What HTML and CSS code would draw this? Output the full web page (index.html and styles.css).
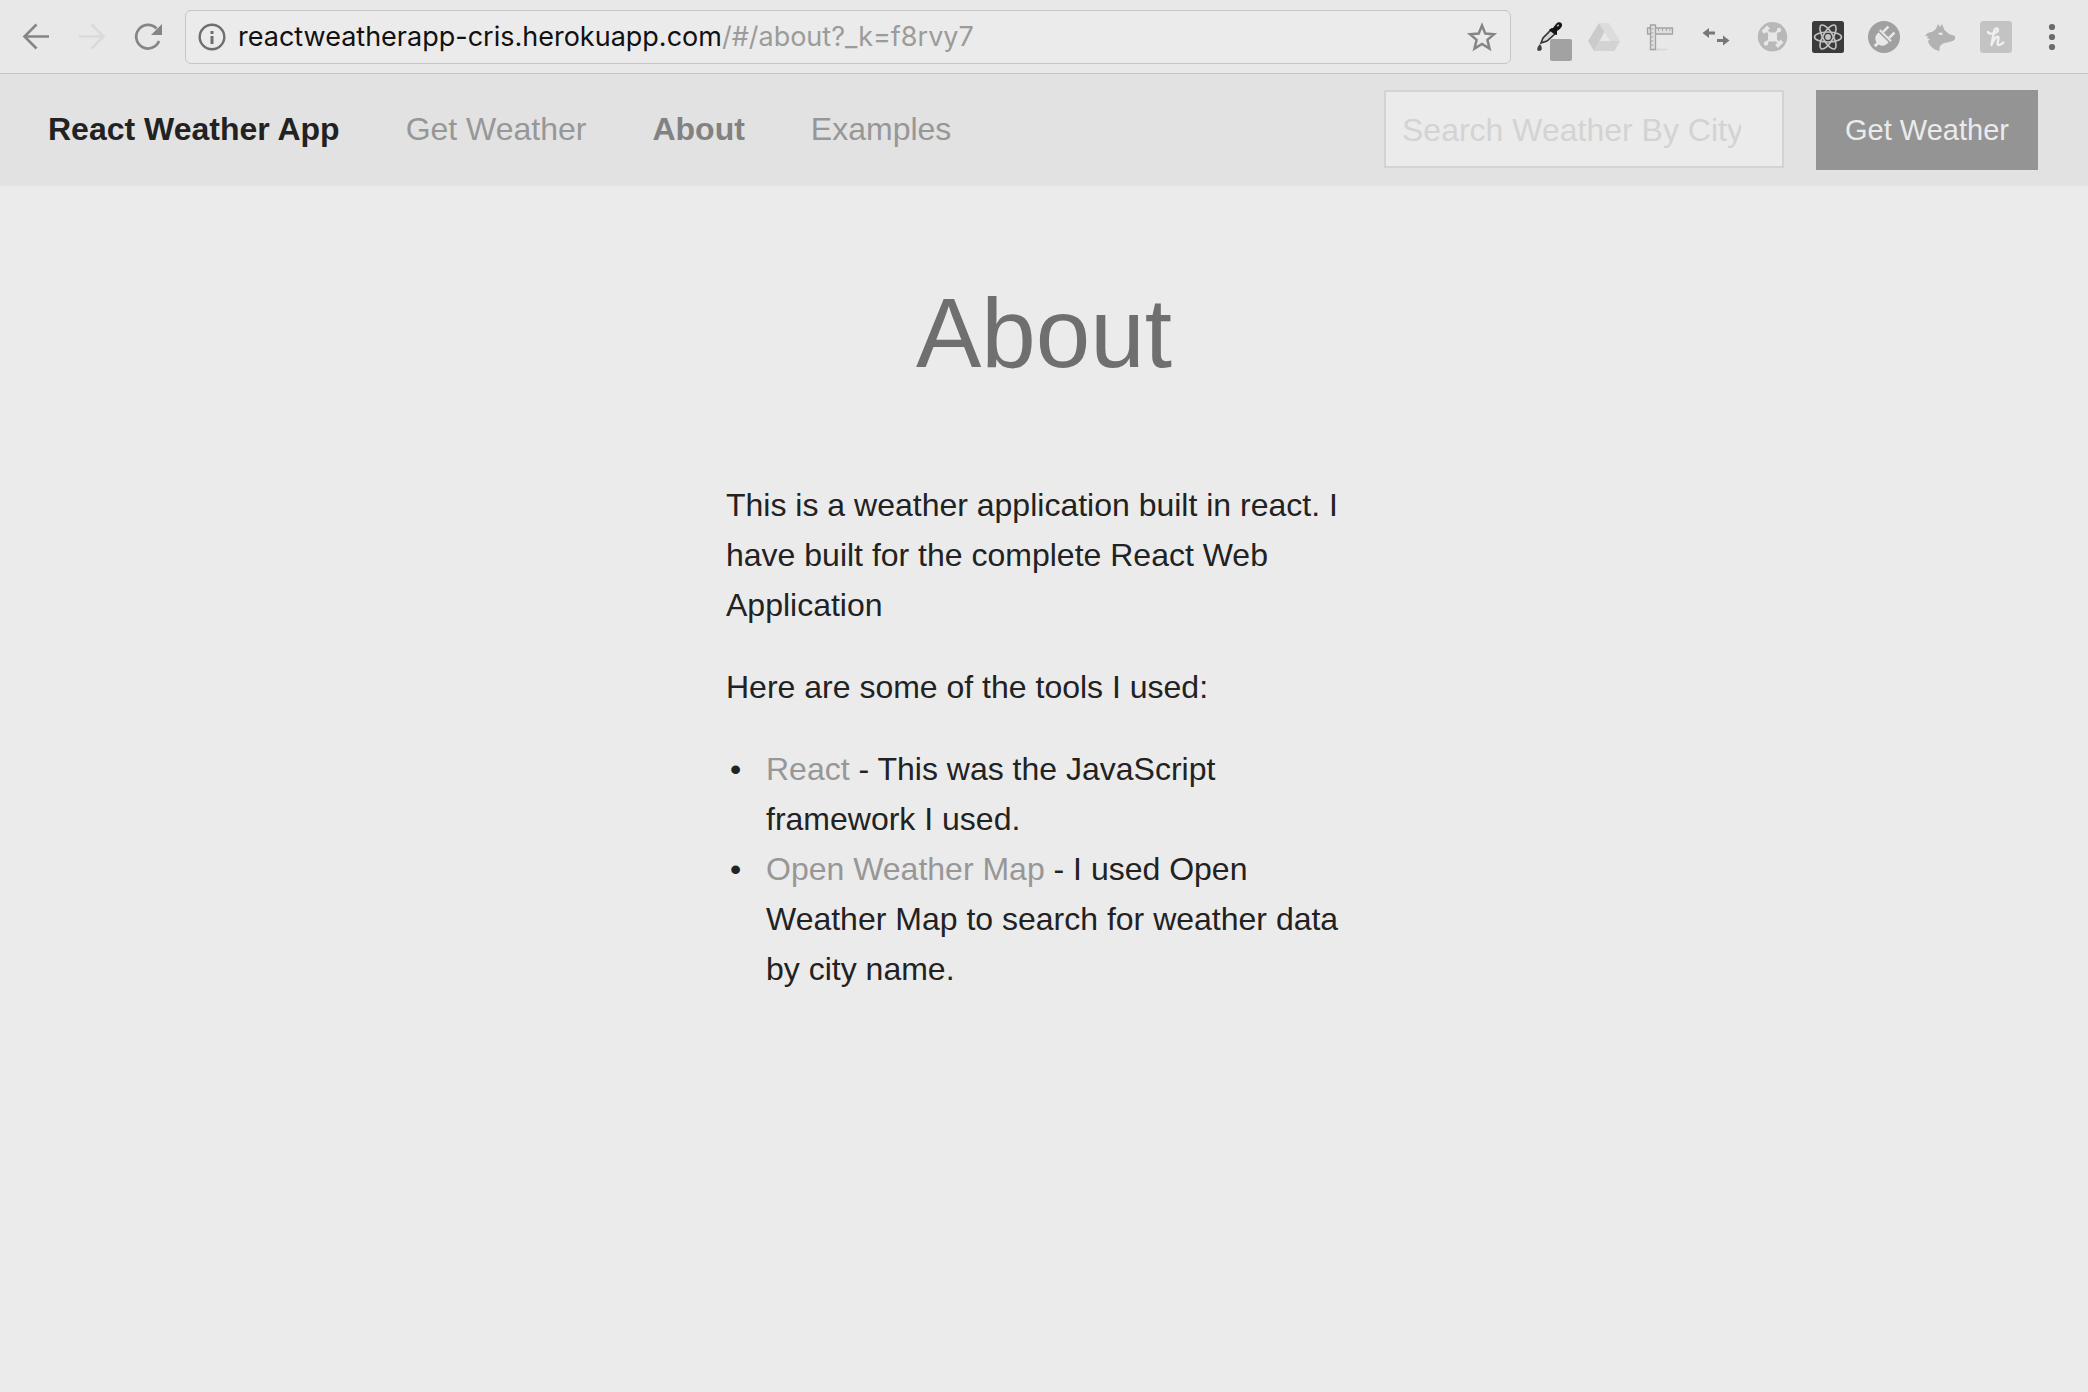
FILE: index.html
```html
<!DOCTYPE html>
<html lang="en">
<head>
<meta charset="utf-8">
<title>React Weather App</title>
<link rel="stylesheet" href="styles.css">
</head>
<body>
<header class="toolbar">
  <div class="tools">
    <button class="tool" type="button" aria-label="Back"><svg viewBox="0 0 32 32" fill="none" stroke="#858585" stroke-width="2.6"><path d="M29 15.5H4.5M16.500 3.500L4.500 15.500L16.500 27.500"/></svg></button>
    <button class="tool" type="button" aria-label="Forward"><svg viewBox="0 0 32 32" fill="none" stroke="#dadada" stroke-width="2.6"><path d="M3 15.500H27.500M15.500 3.500L27.500 15.500L15.500 27.500"/></svg></button>
    <button class="tool" type="button" aria-label="Reload"><svg viewBox="0 0 32 32"><path d="M24.500 7.500A11.800 11.800 0 1 0 27 20" fill="none" stroke="#858585" stroke-width="2.7"/><path d="M30 3V14H19z" fill="#858585"/></svg></button>
  </div>
  <div class="omnibox">
    <svg class="info" viewBox="0 0 28 28"><circle cx="14" cy="14" r="12.300" fill="none" stroke="#6e6e6e" stroke-width="2.400"/><path d="M12.500 8h3v3h-3zM12.500 13h3v8h-3z" fill="#6e6e6e"/></svg>
    <div class="url"><span class="host">reactweatherapp-cris.herokuapp.com</span>/#/about?_k=f8rvy7</div>
    <button class="tool" type="button" aria-label="Bookmark"><svg viewBox="0 0 32 32"><path d="M16 4.500L19.300 12.500L28 13.200L21.400 18.900L23.500 27.500L16 22.900L8.500 27.500L10.600 18.900L4 13.200L12.700 12.500Z" fill="none" stroke="#858585" stroke-width="2.500"/></svg></button>
  </div>
  <div class="tools">
    <button class="tool" type="button" aria-label="Color picker"><svg viewBox="0 0 32 32"><path d="M9 22L11 17L20 8L24 12L15 20Z" fill="#d5d5d5" stroke="#333" stroke-width="1.600"/><path d="M18 8l3-1 3-4c2-3 7-2 6 2-1 2-3 4-5 5l0 4-3-1-5-4z" fill="#151515"/><path d="M25 5l2-1" stroke="#aaa" stroke-width="1.500"/><path d="M8 23c3 4 2 7-1 7s-2-4 1-7z" fill="#444"/><rect x="18" y="18" width="22" height="22" rx="2" fill="#a2a2a2"/></svg></button>
    <button class="tool" type="button" aria-label="Drive"><svg viewBox="0 0 32 32"><path d="M11 2L16.500 11L6 30L0 20Z" fill="#cbcbcb"/><path d="M11 2H21L32 20H22Z" fill="#dcdcdc"/><path d="M11.500 20H32L26.500 30H6Z" fill="#d3d3d3"/></svg></button>
    <button class="tool" type="button" aria-label="Ruler"><svg viewBox="0 0 32 32"><ellipse cx="14" cy="28.500" rx="10" ry="1" fill="#d8d8d8"/><g fill="#dedede" stroke="#a3a3a3" stroke-width="1.300"><path d="M3.500 7h25v6h-25z"/><path d="M6.500 4h5v24.500h-5z"/></g><path d="M14.500 7v3M18.500 7v3M22.500 7v3M26 7v3M7 8h2.500M7 12h2.500M7 16h2.500M7 20h2.500M7 24h2.500" stroke="#a8a8a8"/></svg></button>
    <button class="tool" type="button" aria-label="Redirect"><svg viewBox="0 0 32 32" fill="#777"><path d="M2.500 12L9 7v3.500h6v3H9V17zM29.500 19.500L23 14.500V18h-6v3h6v3.500z"/></svg></button>
    <button class="tool" type="button" aria-label="Network"><svg viewBox="0 0 32 32"><circle cx="16.500" cy="15.800" r="14.700" fill="#b8b8b8"/><g stroke="#e7e7e7" stroke-width="2"><path d="M9 8L24 23M24 8L9 23"/><path d="M7 11.500l5.500-5.500M20.500 25.500l5.500-5.500" stroke-width="4"/></g><g fill="#e7e7e7"><rect x="12" y="11.500" width="9" height="9" rx="2.500"/><circle cx="23" cy="9" r="2.200"/><circle cx="10" cy="22.500" r="2.200"/></g></svg></button>
    <button class="tool" type="button" aria-label="React tools"><svg viewBox="0 0 32 32"><rect width="32" height="32" rx="2.500" fill="#3b3b3b"/><g fill="none" stroke="#c3c3c3" stroke-width="1.600"><ellipse cx="16" cy="16" rx="13.500" ry="5"/><ellipse cx="16" cy="16" rx="13.500" ry="5" transform="rotate(60 16 16)"/><ellipse cx="16" cy="16" rx="13.500" ry="5" transform="rotate(120 16 16)"/></g><circle cx="16" cy="16" r="2.900" fill="#c3c3c3"/></svg></button>
    <button class="tool" type="button" aria-label="Plug"><svg viewBox="0 0 32 32"><circle cx="16" cy="16" r="16" fill="#a0a0a0"/><g transform="rotate(45 16 16)" fill="#e8e8e8"><path d="M8 13h16v2H8zM9 16.500h14v2c0 3.500-2.500 6-5.500 6.500v4h-3v-4C11.500 24.500 9 22 9 18.500z"/><path d="M10.500 5.500h2.600V13h-2.600zM19 5.500h2.600V13H19z"/></g></svg></button>
    <button class="tool" type="button" aria-label="Fox"><svg viewBox="0 0 32 32"><path d="M1 15C3 12 5 11 8 11L12 8L14 3L16 6L18 3L20.500 9L25 13L31 15V18C29 21 24 21 20.500 22C17 23 15 25 15.500 30C10 29 5 25 4 20L6 18L3 17L4 15Z" fill="#b2b2b2"/><path d="M14 12.500c2-1.500 4-1.500 5 1-2 1-4 .5-5-1z" fill="#e5e5e5"/></svg></button>
    <button class="tool" type="button" aria-label="Coupons"><svg viewBox="0 0 32 32"><rect width="32" height="32" rx="3.500" fill="#c3c3c3"/><path d="M8 11C9 14 18 12.500 18 8.800C18 6.800 14.800 6.800 14 10.500L11.500 24C13 19 18 13 18.500 17C18.500 20 16 24 19 24C21 24 22 23 23.300 21.500" fill="none" stroke="#efefef" stroke-width="2.400" stroke-linecap="round" stroke-linejoin="round"/></svg></button>
    <button class="tool" type="button" aria-label="Menu"><svg viewBox="0 0 32 32" fill="#6b6b6b"><circle cx="16" cy="6" r="3.100"/><circle cx="16" cy="16" r="3.100"/><circle cx="16" cy="26" r="3.100"/></svg></button>
  </div>
</header>
<nav class="nav">
  <ul class="menu">
    <li class="brand">React Weather App</li>
    <li><a href="#/">Get Weather</a></li>
    <li><a class="active" href="#/about">About</a></li>
    <li><a href="#/examples">Examples</a></li>
  </ul>
  <form class="search">
    <input type="search" aria-label="Search weather by city" placeholder="Search Weather By City">
    <button class="submit" type="button">Get Weather</button>
  </form>
</nav>
<main class="page">
  <h1>About</h1>
  <p>This is a weather application built in react. I have built for the complete React Web Application</p>
  <p>Here are some of the tools I used:</p>
  <ul class="list">
    <li><a href="#react">React</a> - This was the JavaScript framework I used.</li>
    <li><a href="#map">Open Weather Map</a> - I used Open Weather Map to search for weather data by city name.</li>
  </ul>
</main>
</body>
</html>
```
FILE: styles.css
```css
* { box-sizing: border-box; }
body {
  margin: 0;
  background: #ebebeb;
  color: #222;
  font: 32px/50px "Liberation Sans", Arial, sans-serif;
}
button { border: 0; padding: 0; background: none; font: inherit; }
a { color: #979797; text-decoration: none; }

.toolbar {
  display: flex;
  align-items: center;
  gap: 21px;
  height: 74px;
  padding: 0 20px;
  background: #e8e8e8;
  border-bottom: 1px solid #c6c6c6;
}
.tools { display: flex; gap: 24px; }
.tool { flex: none; width: 32px; height: 32px; }
svg { display: block; width: 100%; height: 100%; overflow: visible; }
.omnibox {
  flex: 1;
  display: flex;
  align-items: center;
  gap: 12px;
  height: 54px;
  padding: 0 12px;
  border: 1px solid #c6c6c6;
  border-radius: 6px;
  background: #ebebeb;
}
.info { flex: none; width: 28px; height: 28px; }
.url {
  flex: 1;
  color: #9b9b9b;
  font: 27px/40px Inter, sans-serif;
  white-space: nowrap;
}
.host { color: #111; }

.nav {
  display: flex;
  justify-content: space-between;
  align-items: center;
  padding: 16px 50px 16px 48px;
  background: #e2e2e2;
}
.menu {
  display: flex;
  gap: 66px;
  margin: 0;
  padding: 0 0 2px;
  list-style: none;
}
.brand, .active { font-weight: bold; }
.active { color: #828282; }
.search { display: flex; gap: 32px; }
.search input {
  width: 400px;
  height: 78px;
  padding: 2px 16px 0;
  border: 2px solid #d3d3d3;
  border-radius: 0;
  background: #ebebeb;
  color: #222;
  font: inherit;
  appearance: none;
}
.search input::placeholder { color: #d3d3d3; opacity: 1; }
.submit {
  width: 222px;
  height: 80px;
  background: #949494;
  color: #ebebeb;
  font-size: 29px;
}

.page {
  width: calc(100% / 3);
  margin: 0 auto;
  padding: 80px 30px;
}
h1 {
  margin: 0 0 80px;
  color: #6f6f6f;
  font-size: 98px;
  font-weight: normal;
  line-height: 134px;
  text-align: center;
}
p { margin: 0 0 32px; }
.list {
  margin: 0 0 0 40px;
  padding: 0;
  list-style-type: "•\2002\00a0";
}
```
